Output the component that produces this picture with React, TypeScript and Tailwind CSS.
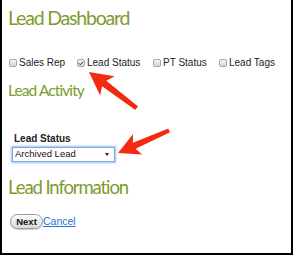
import { Check } from 'lucide-react';

function Box({ checked }: { checked?: boolean }) {
  return (
    <span className="relative inline-flex items-center justify-center shrink-0 w-[8px] h-[8px] rounded-[2px] border border-[#a8a8a8] bg-gradient-to-b from-[#f4f4f4] to-[#d6d6d6] mr-[2px]">
      {checked && <Check className="w-[7px] h-[7px] text-[#333]" strokeWidth={4} />}
    </span>
  );
}

function Arrow({ className }: { className: string }) {
  // tip sits at the left middle (0,12)
  return (
    <svg viewBox="0 0 60 24" className={className}>
      <path d="M0 12 L23 0 L19 8.5 L60 10 L60 14.5 L19 15.5 L23 24 Z" fill="#f42a10" />
    </svg>
  );
}

export default function App() {
  return (
    <div className="relative w-[293px] h-[255px] bg-white border-l-2 border-r-2 border-b-2 border-black overflow-hidden font-['Liberation_Sans',Arial,sans-serif]">
      <div className="pl-[6px] pt-[7px]">
        <h1 className="text-[19.5px] leading-[22px] text-[#7d9b2f] font-['Lato',sans-serif] tracking-[-1.2px] whitespace-nowrap">Lead Dashboard</h1>

        <div className="flex items-center mt-[28px] text-[10px] text-[#222] leading-[12px] whitespace-nowrap">
          <label className="flex items-center w-[68px] ml-[1px]"><Box />Sales Rep</label>
          <label className="flex items-center w-[76px]"><Box checked />Lead Status</label>
          <label className="flex items-center w-[66px]"><Box />PT Status</label>
          <label className="flex items-center"><Box />Lead Tags</label>
        </div>

        <h2 className="mt-[12px] text-[15.5px] leading-[18px] text-[#7d9b2f] font-['Lato',sans-serif] tracking-[-0.9px] whitespace-nowrap">Lead Activity</h2>

        <div className="mt-[34px] ml-[6px] text-[10px] font-bold text-[#222] leading-[12px]">Lead Status</div>
        <div className="mt-[2px] ml-[4px] w-[103px] h-[15px] flex items-center justify-between border border-[#7aa7e8] shadow-[0_0_2px_1px_#9cc0f5] bg-white px-[2px] text-[9.5px] text-[#111] whitespace-nowrap">
          <span>Archived Lead</span>
          <span className="w-0 h-0 border-l-[2.5px] border-r-[2.5px] border-t-[3px] border-l-transparent border-r-transparent border-t-[#222] mr-[3px]" />
        </div>

        <h2 className="mt-[14px] text-[18.5px] leading-[22px] text-[#7d9b2f] font-['Lato',sans-serif] tracking-[-1.1px] whitespace-nowrap">Lead Information</h2>

        <div className="flex items-center mt-[16px] ml-[2px]">
          <button className="h-[15px] w-[33px] rounded-full border border-[#9a9a9a] bg-gradient-to-b from-white to-[#d8d8d8] text-[9.5px] font-bold text-[#111] leading-[13px] shadow-[0_1px_1px_rgba(0,0,0,0.2)]">Next</button>
          <a className="text-[10.5px] text-[#2a6fd6] underline leading-[13px]">Cancel</a>
        </div>
      </div>

      <Arrow className="absolute left-[87px] top-[60px] w-[60px] h-[24px] rotate-[37deg] origin-left" />
      <Arrow className="absolute left-[116px] top-[141px] w-[56px] h-[24px] -rotate-[24deg] origin-left" />
    </div>
  );
}
